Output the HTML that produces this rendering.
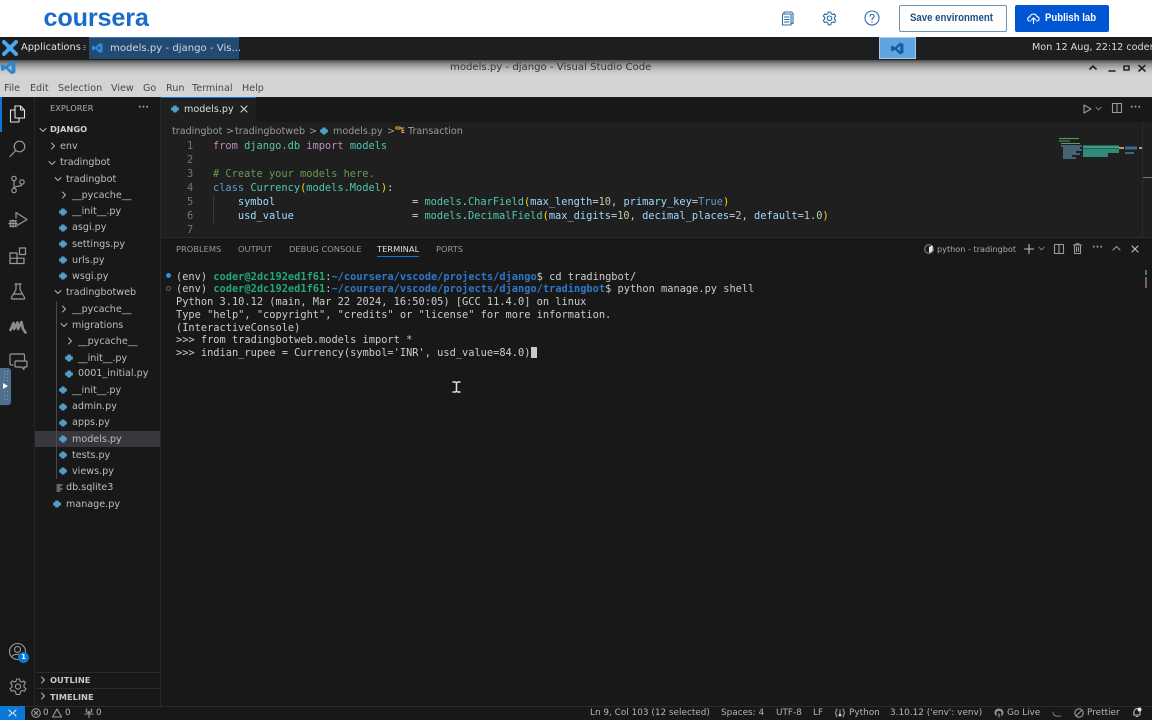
<!DOCTYPE html>
<html lang="en"><head><meta charset="utf-8"><title>models.py - django - Visual Studio Code</title>
<style>
html,body{margin:0;padding:0;width:1152px;height:720px;overflow:hidden;background:#181818}
#r{position:absolute;left:0;top:0;width:1152px;height:720px;overflow:hidden;background:#181818;font-family:"DejaVu Sans","Liberation Sans",sans-serif;filter:blur(.35px)}
.b{position:absolute}
.t{position:absolute;white-space:pre;font-size:9.6px;line-height:16px;color:#c4c4c4}
.m{font-family:"DejaVu Sans Mono","Liberation Mono",monospace;font-size:10.34px;line-height:14px;color:#cccccc}
.s{position:absolute;overflow:visible;fill:none;stroke:#9a9a9a;stroke-width:1.1;stroke-linecap:round;stroke-linejoin:round}
.f{color:#bdbdbd}
.y{position:absolute;width:8px;height:8px}
.g{color:#23a879;font-weight:bold}.u{color:#2f78c8;font-weight:bold}
.k{color:#c586c0}.e{color:#4ec9b0}.bl{color:#569cd6}.v{color:#9cdcfe}.yl{color:#ffd700}.n{color:#b5cea8}.d{color:#d4d4d4}
.st{color:#b5b5b5;font-size:8.9px;line-height:14px;top:706px}
</style></head><body><div id="r">
<svg width="0" height="0" style="position:absolute"><defs>
<symbol id="py" viewBox="0 0 8 8"><path fill="#4f9fc4" d="M2.500.5H5.500L6 2.300H7.500L8 4 7.500 5.700H6L5.500 7.500H2.500L2 5.700H.5L0 4 .5 2.300H2Z"/></symbol>
<symbol id="chr" viewBox="0 0 8 8"><path fill="none" stroke="#b5b5b5" stroke-width="1" stroke-linecap="round" stroke-linejoin="round" d="M2.500 1 5.500 4 2.500 7"/></symbol>
<symbol id="chd" viewBox="0 0 8 8"><path fill="none" stroke="#b5b5b5" stroke-width="1" stroke-linecap="round" stroke-linejoin="round" d="M1 2.500 4 5.500 7 2.500"/></symbol>
</defs></svg>

<!-- Coursera bar -->
<div class="b" style="left:0;top:0;width:1152px;height:37px;background:#fff"></div>
<div class="t" style="left:43.500px;top:3px;font:bold 25.200px/30px 'Liberation Sans',sans-serif;color:#1b6cc9;letter-spacing:-.15px">coursera</div>
<svg class="s" style="left:781px;top:11px;stroke:#2f6ea5" width="14" height="15" viewBox="0 0 14 15"><path d="M3 2.500V1H10.500L12 2.500V12.500H10.500M1.500 3H10V14H1.500ZM3.500 6H8M3.500 8.500H8M3.500 11H8"/></svg>
<svg class="s" style="left:822px;top:11px;stroke:#2f6ea5" width="15" height="15" viewBox="0 0 15 15"><path d="M6.200 1H8.800L9.200 2.800 10.700 3.500 12.400 2.900 13.700 5.100 12.400 6.300V8.200L13.700 9.400 12.400 11.600 10.700 11 9.200 11.800 8.800 13.800H6.200L5.800 11.800 4.300 11 2.600 11.600 1.300 9.400 2.600 8.200V6.300L1.300 5.100 2.600 2.900 4.300 3.500 5.800 2.800Z"/><circle cx="7.500" cy="7.300" r="2.300"/></svg>
<svg class="s" style="left:864px;top:10px;stroke:#2f6ea5" width="16" height="16" viewBox="0 0 16 16"><circle cx="8" cy="8" r="7"/><path d="M6 6.300C6 3.700 10.200 3.800 10.200 6.200 10.200 7.800 8 7.800 8 9.600M8 11.500V12"/></svg>
<div class="b" style="left:899px;top:5px;width:106px;height:25px;border:1px solid #6b93b5;border-radius:2px;background:#fff"></div>
<div class="t" style="left:910px;top:9px;font:bold 11px/18px 'Liberation Sans',sans-serif;color:#1d4e89;transform:scaleX(.875);transform-origin:0 50%">Save environment</div>
<div class="b" style="left:1015px;top:5px;width:94px;height:27px;background:#0056d2;border-radius:2px"></div>
<svg class="s" style="left:1027px;top:12px;stroke:#fff" width="13" height="13" viewBox="0 0 13 13"><path d="M3.500 9H2.800C-.2 9 .2 5 3 4.800 3.500 1.500 8.800 1 9.800 4.600 12.800 4.800 12.800 9 10 9H9.500M6.500 11.500V6M4.500 7.800 6.500 5.800 8.500 7.800"/></svg>
<div class="t" style="left:1045px;top:9px;font:bold 11px/18px 'Liberation Sans',sans-serif;color:#fff;transform:scaleX(.87);transform-origin:0 50%">Publish lab</div>

<!-- XFCE panel -->
<div class="b" style="left:0;top:37px;width:1152px;height:23px;background:#1d1e1f"></div>
<svg class="b" style="left:2px;top:40px" width="16" height="16" viewBox="0 0 16 16"><path stroke="#4da6ec" stroke-width="4" stroke-linecap="round" d="M2 2 14 14M14 2 2 14"/></svg>
<div class="t" style="left:21px;top:39px;font-size:9.800px;line-height:17px;color:#e2e2e2">Applications</div>
<div class="b" style="left:83px;top:45px;width:3px;height:1px;background:#666;box-shadow:0 2px #666,0 4px #666"></div>
<div class="b" style="left:89px;top:37px;width:150px;height:22px;background:#234a72;border-top:1px solid #2f78bb;box-sizing:border-box"></div>
<svg class="b" style="left:92px;top:42px" width="11" height="12" viewBox="0 0 24 24"><path fill="#2f8fe0" d="M17 1 23 4V20L17 23 7 14 2.500 17.500 0 16V8L2.500 6.500 7 10ZM17 7 11 12 17 17Z"/></svg>
<div class="t" style="left:110px;top:39.500px;font-size:10.100px;line-height:17px;color:#d2d8df">models.py - django - Vis...</div>
<div class="b" style="left:879px;top:37px;width:37px;height:22px;background:#5fa4de;border:1px solid #a9cde9;box-sizing:border-box"></div>
<svg class="b" style="left:891px;top:42px" width="13" height="13" viewBox="0 0 24 24"><path fill="#0f5fa8" d="M17 1 23 4V20L17 23 7 14 2.500 17.500 0 16V8L2.500 6.500 7 10ZM17 7 11 12 17 17Z"/></svg>
<div class="t" style="left:1032px;top:39px;font-size:9.650px;line-height:17px;color:#dcdcdc">Mon 12 Aug, 22:12 coder</div>

<!-- Window titlebar + menu -->
<div class="b" style="left:0;top:60px;width:1152px;height:37px;background:linear-gradient(#4e4e4e 0,#8f8f8f 4px,#c2c2c2 10px,#d2d3d2 15px,#d3d4d3 100%)"></div>
<svg class="b" style="left:1px;top:60px" width="15" height="15" viewBox="0 0 24 24"><path fill="#2a86d8" d="M17 1 23 4V20L17 23 7 14 2.500 17.500 0 16V8L2.500 6.500 7 10ZM17 7 11 12 17 17Z"/></svg>
<div class="t" style="left:450px;top:60px;font-size:10.100px;color:#333">models.py - django - Visual Studio Code</div>
<svg class="s" style="left:1088px;top:63px;stroke:#222;stroke-width:1.600" width="60" height="10" viewBox="0 0 60 10"><path d="M2 6 5 3 8 6M21 8H27M36 3H41V7H36ZM51 2.500 57 8M57 2.500 51 8"/></svg>
<div class="t" style="left:4px;top:80.500px;color:#484848">File</div>
<div class="t" style="left:30px;top:80.500px;color:#484848">Edit</div>
<div class="t" style="left:58px;top:80.500px;color:#484848">Selection</div>
<div class="t" style="left:111px;top:80.500px;color:#484848">View</div>
<div class="t" style="left:143px;top:80.500px;color:#484848">Go</div>
<div class="t" style="left:166px;top:80.500px;color:#484848">Run</div>
<div class="t" style="left:192px;top:80.500px;color:#484848">Terminal</div>
<div class="t" style="left:242px;top:80.500px;color:#484848">Help</div>

<!-- Activity bar -->
<div class="b" style="left:0;top:97px;width:35px;height:609px;background:#181818;border-right:1px solid #262626;box-sizing:border-box"></div>
<div class="b" style="left:0;top:97px;width:1.500px;height:35px;background:#0a78d4"></div>
<svg class="s" style="left:9px;top:105px;stroke:#e4e4e4" width="17" height="18" viewBox="0 0 17 18"><path d="M6 1H11.500L15.500 5V13H6ZM11.500 1V5H15.500M6 5H1.500V17H10V13"/></svg>
<svg class="s" style="left:9px;top:140px;stroke-width:1.200" width="17" height="18" viewBox="0 0 17 18"><circle cx="10.500" cy="6.500" r="5.300"/><path d="M6.800 10.500 1 16.500"/></svg>
<svg class="s" style="left:10px;top:175px;stroke-width:1.200" width="16" height="19" viewBox="0 0 16 19"><circle cx="4" cy="3.500" r="2.200"/><circle cx="12" cy="7" r="2.200"/><circle cx="4" cy="15.500" r="2.200"/><path d="M4 5.800V13.200M12 9.200C12 12 4.500 10.500 4 13.200"/></svg>
<svg class="s" style="left:8px;top:211px;stroke-width:1.200" width="20" height="18" viewBox="0 0 20 18"><path d="M8 1.500 19 8.500 9 14.500M8 1.500V7"/><circle cx="5" cy="12.500" r="3.200"/><path d="M1 12.500H9M5 9.300V16M1.800 9.500 3 10.500M8.200 9.500 7 10.500M1.800 15.800 3 14.800M8.200 15.800 7 14.800"/></svg>
<svg class="s" style="left:9px;top:247px;stroke-width:1.200" width="18" height="18" viewBox="0 0 18 18"><path d="M1 6H8V16.500H1ZM1 11.200H15V16.500H8M8 6V11.200M10.500 1H16.500V7.500H10.500Z"/></svg>
<svg class="s" style="left:10px;top:283px;stroke-width:1.200" width="16" height="17" viewBox="0 0 16 17"><path d="M5 1H11M6 1V6.500L1.500 14.500C1 15.500 1.500 16 2.500 16H13.500C14.500 16 15 15.500 14.500 14.500L10 6.500V1M4 11H12"/></svg>
<svg class="b" style="left:9px;top:320px" width="18" height="14" viewBox="0 0 18 14"><path fill="none" stroke="#8c8c8c" stroke-width="2.600" stroke-linejoin="round" stroke-linecap="round" d="M1.500 10 4.500 3 5 9 8.500 2.500 9 9 12.500 2 14 9 16.500 12.500"/></svg>
<svg class="s" style="left:9px;top:353px;stroke-width:1.200" width="19" height="18" viewBox="0 0 19 18"><path d="M4 12H2.500C1.500 12 1 11.500 1 10.500V2.500C1 1.500 1.500 1 2.500 1H14C15 1 15.500 1.500 15.500 2.500V7M7 8H17C17.800 8 18 8.500 18 9V13C18 13.800 17.500 14 17 14H15V16.500L12.500 14H7C6.300 14 6 13.500 6 13V9C6 8.500 6.300 8 7 8Z"/></svg>
<div class="b" style="left:0;top:368px;width:11px;height:37px;background:#4f6f8c;border-radius:0 3px 3px 0;box-shadow:1px 1px 1px #0c2238"></div>
<div class="b" style="left:4px;top:371px;width:1px;height:1px;background:#7d98ae;box-shadow:3px 0 #7d98ae,0 3px #7d98ae,3px 3px #7d98ae,0 6px #7d98ae,3px 6px #7d98ae,0 9px #7d98ae,3px 9px #7d98ae,0 20px #7d98ae,3px 20px #7d98ae,0 24px #7d98ae,3px 24px #7d98ae,0 28px #7d98ae,3px 28px #7d98ae"></div>
<div class="b" style="left:3px;top:383px;width:0;height:0;border-left:5px solid #fff;border-top:3px solid transparent;border-bottom:3px solid transparent"></div>
<svg class="s" style="left:8px;top:642px;stroke-width:1.100" width="19" height="19" viewBox="0 0 19 19"><circle cx="9.500" cy="9.500" r="8"/><circle cx="9.500" cy="7.500" r="3"/><path d="M3.800 15C5 11.500 14 11.500 15.200 15"/></svg>
<div class="b" style="left:18px;top:652px;width:11px;height:11px;border-radius:50%;background:#0a78d4;color:#fff;font:bold 7px/11px 'DejaVu Sans',sans-serif;text-align:center">1</div>
<svg class="s" style="left:9px;top:678px;stroke-width:1.100" width="18" height="18" viewBox="0 0 18 18"><path d="M7.500 1H10.500L11 3.300 12.800 4.100 14.800 2.900 16.500 5 15 6.800V9.200L17 10.700 15.500 13.200 13.200 12.500 11.500 13.700 10.800 16.500H7.200L6.500 13.700 4.800 12.500 2.500 13.200 1 10.700 3 9.200V6.800L1.500 5 3.200 2.900 5.200 4.100 7 3.300Z"/><circle cx="9" cy="8.500" r="2.600"/></svg>

<!-- Explorer -->
<div class="b" style="left:35px;top:97px;width:126px;height:609px;background:#181818;border-right:1px solid #2a2a2a;box-sizing:border-box"></div>
<div class="t" style="left:50px;top:100px;font-size:8.300px;color:#b0b0b0">EXPLORER</div>
<div class="t" style="left:138px;top:100px;font-size:9px;color:#b0b0b0;letter-spacing:.3px;font-weight:bold">···</div>
<svg class="b" style="left:39px;top:126px" width="8" height="8"><use href="#chd"/></svg>
<div class="t" style="left:50px;top:121px;font-size:8.300px;font-weight:bold;color:#d0d0d0">DJANGO</div>
<div class="b" style="left:35px;top:431px;width:125px;height:16px;background:#37373d"></div>
<div class="b" style="left:56px;top:301px;width:1px;height:178px;background:#4a4a4a"></div>

<svg class="b" style="left:49px;top:142px" width="8" height="8"><use href="#chr"/></svg><div class="t f" style="left:60px;top:139px">env</div>
<svg class="b" style="left:48px;top:159px" width="8" height="8"><use href="#chd"/></svg><div class="t f" style="left:60px;top:155px">tradingbot</div>
<svg class="b" style="left:54px;top:175px" width="8" height="8"><use href="#chd"/></svg><div class="t f" style="left:66px;top:171.500px">tradingbot</div>
<svg class="b" style="left:60px;top:191px" width="8" height="8"><use href="#chr"/></svg><div class="t f" style="left:72px;top:188px">__pycache__</div>
<svg class="y" style="left:59px;top:207.500px"><use href="#py"/></svg><div class="t f" style="left:72px;top:204px">__init__.py</div>
<svg class="y" style="left:59px;top:223.500px"><use href="#py"/></svg><div class="t f" style="left:72px;top:220px">asgi.py</div>
<svg class="y" style="left:59px;top:240px"><use href="#py"/></svg><div class="t f" style="left:72px;top:236.500px">settings.py</div>
<svg class="y" style="left:59px;top:256px"><use href="#py"/></svg><div class="t f" style="left:72px;top:252.500px">urls.py</div>
<svg class="y" style="left:59px;top:272px"><use href="#py"/></svg><div class="t f" style="left:72px;top:268.500px">wsgi.py</div>
<svg class="b" style="left:54px;top:288px" width="8" height="8"><use href="#chd"/></svg><div class="t f" style="left:66px;top:285px">tradingbotweb</div>
<svg class="b" style="left:60px;top:305px" width="8" height="8"><use href="#chr"/></svg><div class="t f" style="left:72px;top:301.500px">__pycache__</div>
<svg class="b" style="left:60px;top:321px" width="8" height="8"><use href="#chd"/></svg><div class="t f" style="left:72px;top:317.500px">migrations</div>
<svg class="b" style="left:66px;top:337px" width="8" height="8"><use href="#chr"/></svg><div class="t f" style="left:78px;top:333.500px">__pycache__</div>
<svg class="y" style="left:65px;top:354px"><use href="#py"/></svg><div class="t f" style="left:78px;top:350.500px">__init__.py</div>
<svg class="y" style="left:65px;top:369.500px"><use href="#py"/></svg><div class="t f" style="left:78px;top:366px">0001_initial.py</div>
<svg class="y" style="left:59px;top:386px"><use href="#py"/></svg><div class="t f" style="left:72px;top:382.500px">__init__.py</div>
<svg class="y" style="left:59px;top:402.500px"><use href="#py"/></svg><div class="t f" style="left:72px;top:399px">admin.py</div>
<svg class="y" style="left:59px;top:418.500px"><use href="#py"/></svg><div class="t f" style="left:72px;top:415px">apps.py</div>
<svg class="y" style="left:59px;top:435px"><use href="#py"/></svg><div class="t f" style="left:72px;top:431.500px">models.py</div>
<svg class="y" style="left:59px;top:451px"><use href="#py"/></svg><div class="t f" style="left:72px;top:447.500px">tests.py</div>
<svg class="y" style="left:59px;top:467px"><use href="#py"/></svg><div class="t f" style="left:72px;top:463.500px">views.py</div>
<svg class="s" style="left:56px;top:484px;stroke:#b5b5b5" width="7" height="8" viewBox="0 0 7 8"><path d="M1 1H6M1 3H4M1 5H6M1 7H4"/></svg><div class="t f" style="left:66px;top:480px">db.sqlite3</div>
<svg class="y" style="left:53px;top:500px"><use href="#py"/></svg><div class="t f" style="left:66px;top:496.500px">manage.py</div>

<div class="b" style="left:36px;top:672px;width:124px;height:1px;background:#2a2a2a"></div>
<div class="b" style="left:36px;top:688px;width:124px;height:1px;background:#2a2a2a"></div>
<svg class="b" style="left:39px;top:676px" width="8" height="8"><use href="#chr"/></svg><div class="t" style="left:50px;top:672px;font-size:8.300px;font-weight:bold;color:#c8c8c8">OUTLINE</div>
<svg class="b" style="left:39px;top:692px" width="8" height="8"><use href="#chr"/></svg><div class="t" style="left:50px;top:688.500px;font-size:8.300px;font-weight:bold;color:#c8c8c8">TIMELINE</div>

<!-- Tabs -->
<div class="b" style="left:161px;top:97px;width:991px;height:25px;background:#181818"></div>
<div class="b" style="left:161px;top:97px;width:95px;height:25px;background:#1f1f1f;border-top:1px solid #0a78d4;box-sizing:border-box"></div>
<svg class="y" style="left:171px;top:105px"><use href="#py"/></svg>
<div class="t" style="left:184px;top:102px;color:#dedede">models.py</div>
<svg class="s" style="left:240px;top:105px;stroke:#d0d0d0" width="8" height="8" viewBox="0 0 8 8"><path d="M1 1 7 7M7 1 1 7"/></svg>
<svg class="s" style="left:1083px;top:104px" width="9" height="10" viewBox="0 0 9 10"><path d="M1 1 8 5 1 9Z"/></svg>
<svg class="b" style="left:1095px;top:105px;opacity:.7" width="7" height="7"><use href="#chd"/></svg>
<svg class="s" style="left:1112px;top:103px" width="10" height="10" viewBox="0 0 10 10"><path d="M.5.5H9.500V9.500H.5ZM5 .5V9.500"/></svg>
<div class="t" style="left:1130px;top:100px;font-size:9px;font-weight:bold;color:#a8a8a8;letter-spacing:.3px">···</div>

<!-- Editor -->
<div class="b" style="left:161px;top:122px;width:991px;height:115px;background:#1f1f1f"></div>
<div class="t" style="left:172px;top:123.500px;color:#9a9a9a">tradingbot</div>
<div class="t" style="left:226px;top:123.500px;color:#9a9a9a">&gt;</div>
<div class="t" style="left:235px;top:123.500px;color:#9a9a9a">tradingbotweb</div>
<div class="t" style="left:309px;top:123.500px;color:#9a9a9a">&gt;</div>
<svg class="y" style="left:320px;top:127px"><use href="#py"/></svg>
<div class="t" style="left:333px;top:123.500px;color:#9a9a9a">models.py</div>
<div class="t" style="left:387px;top:123.500px;color:#9a9a9a">&gt;</div>
<svg class="s" style="left:395px;top:126px;stroke:#e8a33d" width="10" height="9" viewBox="0 0 10 9"><path d="M1 1H5V3H1ZM5 2H9M7 2V6.500H9M7 4.500H9"/></svg>
<div class="t" style="left:408px;top:123.500px;color:#9a9a9a">Transaction</div>

<div class="t m" style="left:187px;top:139px;color:#6e7681">1</div>
<div class="t m" style="left:187px;top:153px;color:#6e7681">2</div>
<div class="t m" style="left:187px;top:167px;color:#6e7681">3</div>
<div class="t m" style="left:187px;top:181px;color:#6e7681">4</div>
<div class="t m" style="left:187px;top:195px;color:#6e7681">5</div>
<div class="t m" style="left:187px;top:209px;color:#6e7681">6</div>
<div class="t m" style="left:187px;top:223px;color:#6e7681">7</div>
<div class="t m" style="left:213px;top:139px"><span class="k">from</span> <span class="e">django.db</span> <span class="k">import</span> <span class="e">models</span></div>
<div class="t m" style="left:213px;top:167px;color:#6a9955"># Create your models here.</div>
<div class="t m" style="left:213px;top:181px"><span class="bl">class</span> <span class="e">Currency</span><span class="yl">(</span><span class="e">models.Model</span><span class="yl">)</span>:</div>
<div class="t m" style="left:213px;top:195px">    <span class="v">symbol</span>                      <span class="d">=</span> <span class="e">models</span>.<span class="e">CharField</span><span class="yl">(</span><span class="v">max_length</span>=<span class="n">10</span>, <span class="v">primary_key</span>=<span class="bl">True</span><span class="yl">)</span></div>
<div class="t m" style="left:213px;top:209px">    <span class="v">usd_value</span>                   <span class="d">=</span> <span class="e">models</span>.<span class="e">DecimalField</span><span class="yl">(</span><span class="v">max_digits</span>=<span class="n">10</span>, <span class="v">decimal_places</span>=<span class="n">2</span>, <span class="v">default</span>=<span class="n">1.0</span><span class="yl">)</span></div>
<div class="b" style="left:213px;top:195px;width:1px;height:28px;background:#3a3a3a"></div>
<!-- Minimap -->
<svg class="b" style="left:1058px;top:137px" width="86" height="24" viewBox="0 0 86 24"><g fill="none" stroke-width="1"><path stroke="#5f9a6a" d="M1 1.500H21M1 4H12"/><path stroke="#6a9955" d="M3 6.500H22"/><path stroke="#6aa7c8" d="M3 9H24M5 11H22M5 13H24M5 15H18M5 17H22M5 19H14M5 21H18"/><path stroke="#3a9d88" stroke-width="3" d="M25 10H61"/><path stroke="#2f8a78" stroke-width="4" d="M25 14H61M25 18H50"/><path stroke="#2f6f96" stroke-width="3" d="M67 11H79"/><path stroke="#6aa7c8" d="M67 16H76"/><path stroke="#c09a50" stroke-width="2" d="M61 11H66M81 11H84"/></g></svg>
<div class="b" style="left:1142px;top:122px;width:1px;height:115px;background:#2c2c2c"></div>
<div class="b" style="left:1143px;top:177px;width:9px;height:1px;background:#777"></div>

<!-- Panel -->
<div class="b" style="left:161px;top:237px;width:991px;height:469px;background:#181818;border-top:1px solid #2b2b2b;box-sizing:border-box"></div>
<div class="t" style="left:176px;top:241px;font-size:8.300px;color:#9a9a9a">PROBLEMS</div>
<div class="t" style="left:238px;top:241px;font-size:8.300px;color:#9a9a9a">OUTPUT</div>
<div class="t" style="left:289px;top:241px;font-size:8.300px;color:#9a9a9a">DEBUG CONSOLE</div>
<div class="t" style="left:377px;top:241px;font-size:8.300px;color:#e0e0e0">TERMINAL</div>
<div class="b" style="left:377px;top:256px;width:42px;height:1px;background:#0a78d4"></div>
<div class="t" style="left:436px;top:241px;font-size:8.300px;color:#9a9a9a">PORTS</div>
<svg class="b" style="left:924px;top:244px" width="10" height="10" viewBox="0 0 10 10"><circle cx="5" cy="5" r="4.300" fill="none" stroke="#8a8a8a"/><path fill="#e8e8e8" d="M5 3 8.500 1.500V7L5 9Z"/></svg>
<div class="t" style="left:937px;top:241px;font-size:8.150px;color:#ababab">python - tradingbot</div>
<svg class="s" style="left:1024px;top:244px;stroke:#c0c0c0" width="10" height="10" viewBox="0 0 10 10"><path d="M5 .5V9.500M.5 5H9.500"/></svg>
<svg class="b" style="left:1038px;top:245px;opacity:.75" width="7" height="7"><use href="#chd"/></svg>
<svg class="s" style="left:1054px;top:244px" width="10" height="10" viewBox="0 0 10 10"><path d="M.5.5H9.500V9.500H.5ZM5 .5V9.500"/></svg>
<svg class="s" style="left:1073px;top:243px" width="9" height="11" viewBox="0 0 9 11"><path d="M.5 2H8.500M3 2V.8H6V2M1.500 2V10.500H7.500V2M3.500 4V8.500M5.500 4V8.500"/></svg>
<div class="t" style="left:1092px;top:240px;font-size:9px;font-weight:bold;color:#a8a8a8;letter-spacing:.3px">···</div>
<svg class="s" style="left:1112px;top:245px" width="9" height="7" viewBox="0 0 9 7"><path d="M1 5 4.500 1.500 8 5"/></svg>
<svg class="s" style="left:1131px;top:245px;stroke:#c0c0c0" width="8" height="8" viewBox="0 0 8 8"><path d="M1 1 7 7M7 1 1 7"/></svg>

<!-- Terminal -->
<div class="b" style="left:166px;top:273px;width:5px;height:5px;border-radius:50%;background:#2f8fd8"></div>
<div class="b" style="left:166px;top:286px;width:5px;height:5px;border-radius:50%;border:1px solid #666;box-sizing:border-box"></div>
<div class="t m" style="left:176px;top:269.500px">(env) <span class="g">coder@2dc192ed1f61</span>:<span class="u">~/coursera/vscode/projects/django</span>$ cd tradingbot/</div>
<div class="t m" style="left:176px;top:282px">(env) <span class="g">coder@2dc192ed1f61</span>:<span class="u">~/coursera/vscode/projects/django/tradingbot</span>$ python manage.py shell</div>
<div class="t m" style="left:176px;top:295px">Python 3.10.12 (main, Mar 22 2024, 16:50:05) [GCC 11.4.0] on linux</div>
<div class="t m" style="left:176px;top:307.500px">Type "help", "copyright", "credits" or "license" for more information.</div>
<div class="t m" style="left:176px;top:320.500px">(InteractiveConsole)</div>
<div class="t m" style="left:176px;top:333px">&gt;&gt;&gt; from tradingbotweb.models import *</div>
<div class="t m" style="left:176px;top:345.500px">&gt;&gt;&gt; indian_rupee = Currency(symbol='INR', usd_value=84.0)</div>
<div class="b" style="left:531px;top:347px;width:6px;height:11px;background:#c8c8c8"></div>
<svg class="s" style="left:452px;top:381px;stroke:#e0e0e0;stroke-width:1.500" width="9" height="12" viewBox="0 0 9 12"><path d="M1 1H3.500L4.500 2 5.500 1H8M4.500 2V10M1 11H3.500L4.500 10 5.500 11H8"/></svg>
<div class="b" style="left:1145px;top:270px;width:2px;height:5px;background:#2a7f96"></div>
<div class="b" style="left:1145px;top:277px;width:2px;height:11px;background:#666"></div>

<!-- Status bar -->
<div class="b" style="left:0;top:706px;width:1152px;height:14px;background:#181818;border-top:1px solid #2b2b2b;box-sizing:border-box"></div>
<div class="b" style="left:0;top:706px;width:25px;height:14px;background:#0a78d4"></div>
<svg class="s" style="left:8px;top:709px;stroke:#d8ecff" width="9" height="9" viewBox="0 0 9 9"><path d="M1 7 4 4 1 1M8 1 5 4 8 7"/></svg>
<svg class="s" style="left:31px;top:708px" width="10" height="10" viewBox="0 0 10 10"><circle cx="5" cy="5" r="4.300"/><path d="M3.300 3.300 6.700 6.700M6.700 3.300 3.300 6.700"/></svg>
<div class="t st" style="left:43px">0</div>
<svg class="s" style="left:52px;top:708px" width="10" height="10" viewBox="0 0 10 10"><path d="M5 1 9.500 9H.5Z"/></svg>
<div class="t st" style="left:65px">0</div>
<svg class="s" style="left:84px;top:708px" width="10" height="10" viewBox="0 0 10 10"><path d="M5 3V9.500M3 1C1 3 3 5 5 4 7 5 9 3 7 1M1 6H9"/></svg>
<div class="t st" style="left:96px">0</div>
<div class="t st" style="left:590px">Ln 9, Col 103 (12 selected)</div>
<div class="t st" style="left:721px">Spaces: 4</div>
<div class="t st" style="left:776px">UTF-8</div>
<div class="t st" style="left:813px">LF</div>
<svg class="s" style="left:835px;top:708px" width="10" height="10" viewBox="0 0 10 10"><path d="M2 1 .5 5 2 9M8 1 9.500 5 8 9"/><circle cx="5" cy="7" r="1.500" fill="#ccc" stroke="none"/><path d="M5 2V6"/></svg>
<div class="t st" style="left:849px">Python</div>
<div class="t st" style="left:890px">3.10.12 ('env': venv)</div>
<svg class="s" style="left:994px;top:708px;fill:#8f8f8f;stroke:none" width="10" height="10" viewBox="0 0 10 10"><path d="M5 .5C8 .5 9.500 2.500 9.500 5 9.500 6.500 8.500 7.500 7.500 8L7 6.500C8 6 8 3 5 3S2 6 3 6.500L2.500 8C1.500 7.500.5 6.500.5 5 .5 2.500 2 .5 5 .5ZM4.200 5.500H5.800L5.500 9.500H4.500Z"/></svg>
<div class="t st" style="left:1007px">Go Live</div>
<svg class="s" style="left:1052px;top:711px;stroke:#777" width="10" height="7" viewBox="0 0 10 7"><path d="M1 1C1 4 3 6 9 5"/></svg>
<svg class="s" style="left:1074px;top:708px" width="10" height="10" viewBox="0 0 10 10"><circle cx="5" cy="5" r="4.200"/><path d="M2 8 8 2"/></svg>
<div class="t st" style="left:1087px">Prettier</div>
<svg class="s" style="left:1132px;top:707px;stroke:#b8b8b8" width="10" height="11" viewBox="0 0 10 11"><path d="M2 8C1.500 5 2 2 5 1.500 6.500 1.500 8 3 8 5V8H1.500M4 9.500H6"/><circle cx="7.500" cy="2.500" r="2" fill="#e8e8e8" stroke="none"/></svg>
</div></body></html>
